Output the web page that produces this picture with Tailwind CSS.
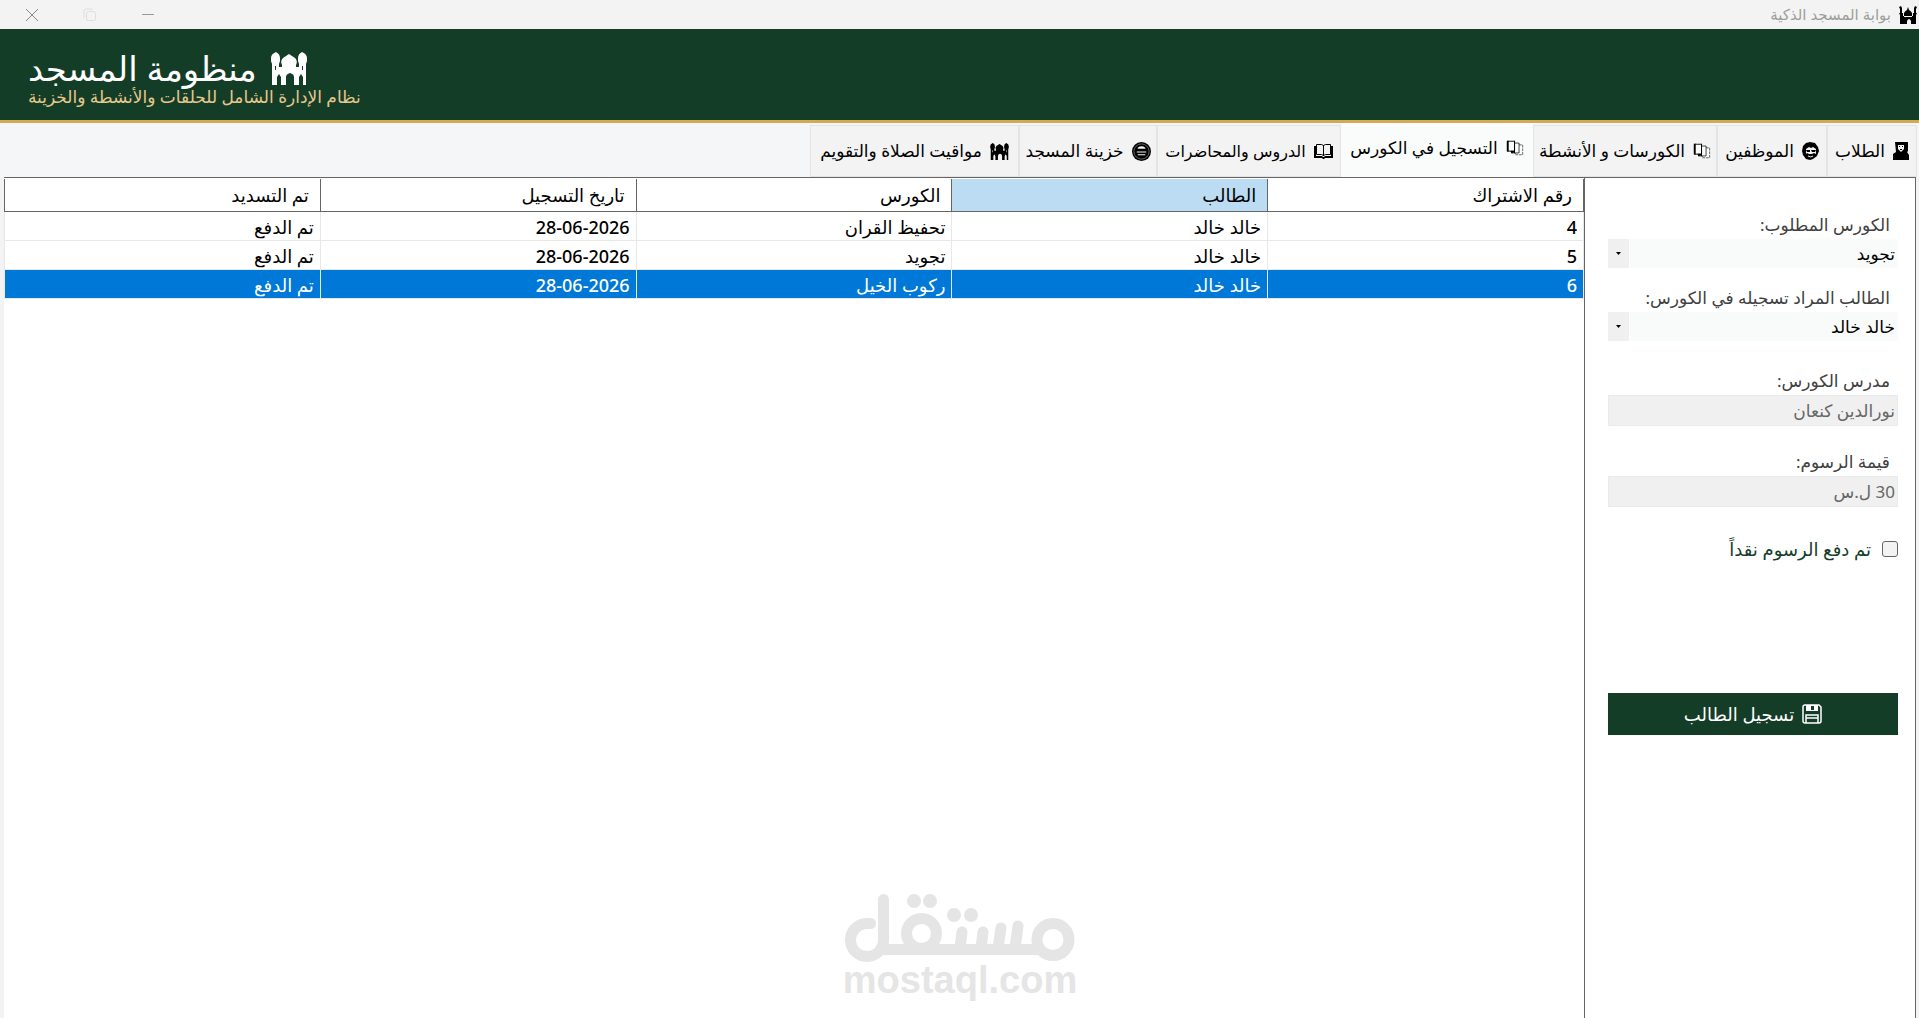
<!DOCTYPE html>
<html lang="ar" dir="rtl">
<head>
<meta charset="utf-8">
<title>بوابة المسجد الذكية</title>
<script src="https://cdn.jsdelivr.net/npm/@tailwindcss/browser@4"></script>
</head>
<body class="flex min-h-screen flex-col bg-[#f3f3f3] font-['Noto_Sans','DejaVu_Sans',sans-serif] text-[17px] text-black">

<svg class="hidden" aria-hidden="true">
  <symbol id="mosque" viewBox="0 0 36 33">
    <path fill="currentColor" fill-rule="evenodd" d="M1 33V12L0 9V6Q0 2 5 0q4 2 4 6v3l-1 3v3h3v-2q-2-4 1-7 3-2 6-4 3 2 6 4 3 3 1 7v2h3v-3l-1-3V6q0-4 4-6 5 2 5 6v3l-1 3v21h-3v-8l-2-3-2 3v8h-5v-8q0-3-4-4-4 1-4 4v8h-5v-8l-2-3-2 3v8zM4 14v4h1v-4zM31 14v4h1v-4z"/>
  </symbol>
  <symbol id="pages" viewBox="0 0 20 18">
    <g fill="#fafcfb" stroke="currentColor"><path stroke-opacity=".65" stroke-dasharray="3 1" d="M10.500 5.500h8v11h-8z"/><path stroke-opacity=".8" d="M6.500 3.500h8v11h-8z"/><path d="M1.500 1.500h8v11h-8z"/></g>
    <path fill="currentColor" d="M1 1h2v12H1zM5 12h5v3l-2-1-2 1zM9 1h1v12H9z"/>
  </symbol>
</svg>

<div class="flex h-[29px] items-center justify-between pr-[2px] pl-6">
  <div class="flex items-center gap-2">
    <svg class="h-[18px] w-[18px]" viewBox="0 0 18 18"><path fill-rule="evenodd" d="M1 18V9L0 7h1V3L0 1l2-1 1 2v5h1v3h1V7q1-2 3-3l1-3 1 3q2 1 3 3v3h1V7h1V2l1-2 2 1-1 2v4h1l-1 2v9h-5v-3q-2-4-4 0v3zM5 10v1h8v-1z"/></svg>
    <h1 class="text-[15px] text-[#9a9f9a]">بوابة المسجد الذكية</h1>
  </div>
  <div class="flex items-center gap-[42px]">
    <button aria-label="تصغير"><svg class="h-4 w-4" viewBox="0 0 16 16"><path stroke="#999" d="M2 7.500h12"/></svg></button>
    <button aria-label="استعادة"><svg class="h-4 w-4" viewBox="0 0 16 16" fill="none" stroke="#dedede"><rect x="4.500" y="4.500" width="9" height="9" rx="2"/><path d="M2 11V4q0-2 2-2h7"/></svg></button>
    <button aria-label="إغلاق"><svg class="h-4 w-4" viewBox="0 0 16 16"><path stroke="#888" d="M2 2l12 12M14 2L2 14"/></svg></button>
  </div>
</div>

<header class="flex h-[94px] flex-col items-end border-b-[3px] border-[#d4a855] bg-[#143d28] pt-5 pl-7">
  <div class="flex items-center gap-[14px] text-white">
    <svg class="h-[33px] w-9"><use href="#mosque"/></svg>
    <h2 class="text-[34px] leading-[38px]">منظومة المسجد</h2>
  </div>
  <p class="leading-5 text-[#e6c88c]">نظام الإدارة الشامل للحلقات والأنشطة والخزينة</p>
</header>

<nav class="flex h-[54px] items-stretch bg-[#f5f6f8] px-[2px] text-black">
  <a href="#" class="mt-[2px] flex w-[90px] items-center justify-center gap-2 border border-[#e4e4e4] bg-[#f3f3f3] whitespace-nowrap">
    <svg class="h-[18px] w-4 shrink-0" viewBox="0 0 16 18"><path d="M2 0h13v9l-1 1 2 3v5H0v-6l3-2z"/><path fill="#f3f3f3" d="M5 3h6v4L8 10 5 7z"/><path d="M6 4h1v1H6zM9 4h1v1H9zM7 7h2v1H7z"/></svg>الطلاب</a>
  <a href="#" class="mt-[2px] flex w-[110px] items-center justify-center gap-2 border border-[#e4e4e4] bg-[#f3f3f3] whitespace-nowrap">
    <svg class="h-[18px] w-[17px] shrink-0" viewBox="0 0 17 18"><path d="M4 1l4-1 5 1 3 4 1 4-2 5-4 3-3 1-4-1-3-4-1-4 1-5z"/><path fill="#f3f3f3" d="M4 7l3-2 2 1 2-1 3 2v5l-2-1-2 1H7l-2-1-1 1z"/><path d="M4 8h4v2H5zM9 8h5l-1 2h-3z"/><path fill="none" stroke="#f3f3f3" d="M6 14q3 2 5 0"/></svg>الموظفين</a>
  <a href="#" class="mt-[2px] flex w-[184px] items-center justify-center gap-2 border border-[#e4e4e4] bg-[#f3f3f3] whitespace-nowrap">
    <svg class="h-[18px] w-[18px] shrink-0"><use href="#pages"/></svg>الكورسات و الأنشطة</a>
  <a href="#" aria-current="page" class="flex w-[192px] items-center justify-center gap-2 bg-[#fafcfb] pb-1 whitespace-nowrap">
    <svg class="h-[18px] w-[18px] shrink-0"><use href="#pages"/></svg>التسجيل في الكورس</a>
  <a href="#" class="mt-[2px] flex w-[184px] items-center justify-center gap-2 border border-[#e4e4e4] bg-[#f3f3f3] text-base whitespace-nowrap">
    <svg class="h-[15px] w-[19px] shrink-0" viewBox="0 0 19 15"><path fill="none" stroke="#000" d="M2.500.500h5l2 1 2-1h5v10h-5l-2 1-2-1h-5zM9.500 1v11"/><path d="M0 2h2v10h6l1 1h1l1-1h6V2h2v12h-8l-1 1H9l-1-1H0z"/></svg>الدروس والمحاضرات</a>
  <a href="#" class="mt-[2px] flex w-[138px] items-center justify-center gap-2 border border-[#e4e4e4] bg-[#f3f3f3] whitespace-nowrap">
    <svg class="h-[19px] w-[19px] shrink-0" viewBox="0 0 20 20"><circle cx="10" cy="10" r="10"/><circle cx="10" cy="10" r="8" fill="none" stroke="#999" stroke-width=".7"/><path fill="#f3f3f3" d="M6 6q4-3 8 0v1H6zM5 10h10v1H5zM6 13h8v1H6z"/></svg>خزينة المسجد</a>
  <a href="#" class="mt-[2px] flex w-[209px] items-center justify-center gap-2 border border-[#e4e4e4] bg-[#f3f3f3] whitespace-nowrap">
    <svg class="h-[17px] w-[19px] shrink-0"><use href="#mosque"/></svg>مواقيت الصلاة والتقويم</a>
</nav>

<main class="relative mr-[3px] ml-1 flex flex-1 border-t border-[#666] bg-white">
  <form class="flex w-[332px] shrink-0 flex-col border-x border-[#666] pr-[17px] pl-[23px] text-[#404040]">
    <label for="course" class="mt-8 pr-2 leading-[29px]">الكورس المطلوب:</label>
    <div class="relative">
      <select id="course" class="block h-[29px] w-full appearance-none bg-[#f9fbfa] pr-[3px] text-black"><option>تجويد</option></select>
      <span class="pointer-events-none absolute inset-y-0 left-0 flex w-[22px] items-center justify-center border-r border-white bg-[#f0f0f0]"><svg class="h-[3px] w-[5px]" viewBox="0 0 5 3"><path d="M0 0h5L2.500 3z"/></svg></span>
    </div>
    <label for="student" class="mt-[15px] pr-2 leading-[29px]">الطالب المراد تسجيله في الكورس:</label>
    <div class="relative">
      <select id="student" class="block h-[29px] w-full appearance-none bg-[#f9fbfa] pr-[3px] text-black"><option>خالد خالد</option></select>
      <span class="pointer-events-none absolute inset-y-0 left-0 flex w-[22px] items-center justify-center border-r border-white bg-[#f0f0f0]"><svg class="h-[3px] w-[5px]" viewBox="0 0 5 3"><path d="M0 0h5L2.500 3z"/></svg></span>
    </div>
    <label for="teacher" class="mt-[25px] pr-2 leading-[29px]">مدرس الكورس:</label>
    <input id="teacher" readonly value="نورالدين كنعان" class="h-[31px] w-full border border-[#eaeaea] bg-[#f0f0f0] pr-[2px] text-[#666]">
    <label for="fee" class="mt-[21px] pr-2 leading-[29px]">قيمة الرسوم:</label>
    <input id="fee" readonly value="30 ل.س" class="h-[31px] w-full border border-[#eaeaea] bg-[#f0f0f0] pr-[2px] text-[#666]">
    <label class="mt-7 flex h-7 items-center gap-[11px] text-lg text-[#143d28]"><input type="checkbox" class="h-4 w-4 appearance-none rounded-[3px] border border-[#666] bg-[#f3f3f3]">تم دفع الرسوم نقداً</label>
    <button type="button" class="mt-[130px] flex h-[42px] items-center justify-center gap-2 bg-[#143d28] text-lg text-white">
      <svg class="h-5 w-5" viewBox="0 0 20 20"><path fill="none" stroke="currentColor" stroke-width="1.500" d="M1 3q0-2 2-2h14l2 2v14q0 2-2 2H3q-2 0-2-2zM4 19v-8h12v8M4 14h12"/><path fill="currentColor" d="M4 1h12v6H4z"/><path fill="#143d28" d="M9 2h3v4H9z"/></svg>تسجيل الطالب</button>
  </form>

  <div class="flex-1 pt-px">
    <table class="w-full table-fixed border-collapse text-right text-lg">
      <thead>
        <tr class="h-8 leading-7">
          <th class="border border-t-0 border-[#666] pr-[11px] font-normal">رقم الاشتراك</th>
          <th class="border border-t-0 border-[#666] bg-[#bbdcf3] pr-[11px] font-normal">الطالب</th>
          <th class="border border-t-0 border-[#666] pr-[11px] font-normal">الكورس</th>
          <th class="border border-t-0 border-[#666] pr-[11px] font-normal">تاريخ التسجيل</th>
          <th class="border border-t-0 border-[#666] pr-[11px] font-normal">تم التسديد</th>
        </tr>
      </thead>
      <tbody class="leading-[26px] font-medium">
        <tr class="h-[29px]"><td class="border border-[#e8e8e8] pt-[2px] pr-[6px]">4</td><td class="border border-[#e8e8e8] pt-[2px] pr-[6px]">خالد خالد</td><td class="border border-[#e8e8e8] pt-[2px] pr-[6px]">تحفيظ القران</td><td class="border border-[#e8e8e8] pt-[2px] pr-[6px]"><bdi dir="ltr">28-06-2026</bdi></td><td class="border border-[#e8e8e8] pt-[2px] pr-[6px]">تم الدفع</td></tr>
        <tr class="h-[29px]"><td class="border border-[#e8e8e8] pt-[2px] pr-[6px]">5</td><td class="border border-[#e8e8e8] pt-[2px] pr-[6px]">خالد خالد</td><td class="border border-[#e8e8e8] pt-[2px] pr-[6px]">تجويد</td><td class="border border-[#e8e8e8] pt-[2px] pr-[6px]"><bdi dir="ltr">28-06-2026</bdi></td><td class="border border-[#e8e8e8] pt-[2px] pr-[6px]">تم الدفع</td></tr>
        <tr class="h-[29px] bg-[#0078d7] text-white"><td class="border border-[#e8e8e8] pt-[2px] pr-[6px]">6</td><td class="border border-[#e8e8e8] pt-[2px] pr-[6px]">خالد خالد</td><td class="border border-[#e8e8e8] pt-[2px] pr-[6px]">ركوب الخيل</td><td class="border border-[#e8e8e8] pt-[2px] pr-[6px]"><bdi dir="ltr">28-06-2026</bdi></td><td class="border border-[#e8e8e8] pt-[2px] pr-[6px]">تم الدفع</td></tr>
      </tbody>
    </table>
  </div>

  <div class="pointer-events-none absolute inset-x-0 bottom-5 flex flex-col items-center text-[#e5e5e5]">
    <svg class="h-[68px] w-[230px]" viewBox="0 0 230 68" role="img" aria-label="مستقل" fill="none" stroke="currentColor" stroke-width="11" stroke-linecap="round">
      <path d="M25.500 29.500H21.500A16.500 16.500 0 1 0 38.500 46V5.500M36 55.500H194M117 38l-2 16M138 38l-2 16M156 34l-3 20M173 32l-3 22"/><circle cx="76.500" cy="39.500" r="15"/><circle cx="208" cy="45.500" r="16"/>
      <g fill="currentColor" stroke="none"><circle cx="69" cy="7" r="7"/><circle cx="85" cy="7" r="7"/><circle cx="109" cy="21" r="7"/><circle cx="126" cy="21" r="7"/></g>
    </svg>
    <span dir="ltr" class="font-['Liberation_Sans',sans-serif] text-[38px] leading-9 font-bold">mostaql.com</span>
  </div>
</main>
</body>
</html>
